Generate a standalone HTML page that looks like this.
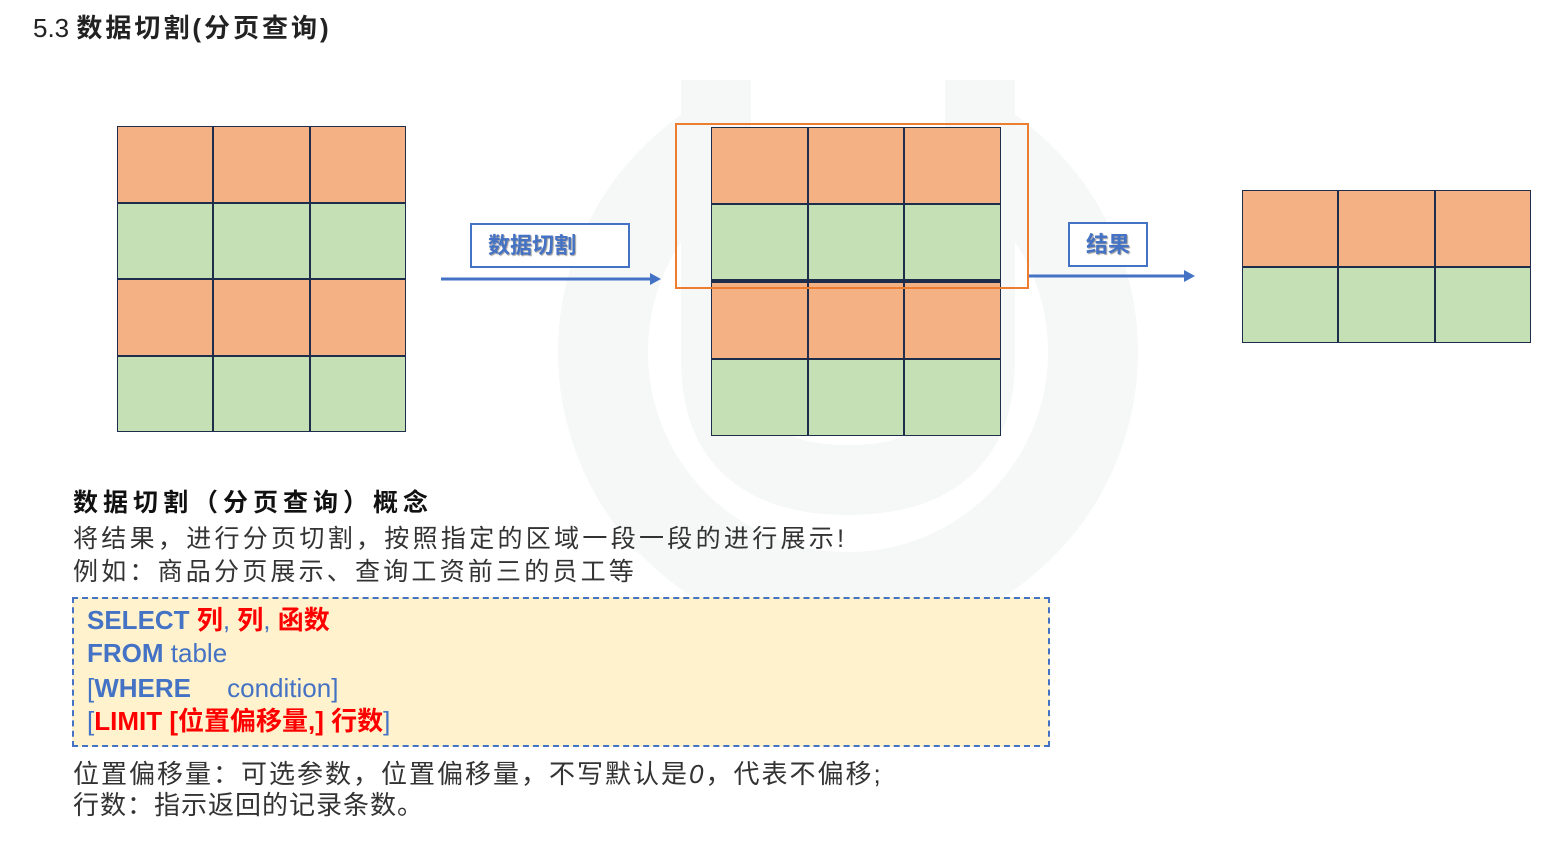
<!DOCTYPE html>
<html><head><meta charset="utf-8"><style>
body{margin:0;width:1544px;height:842px;background:#fff;position:relative;overflow:hidden;font-family:"Liberation Sans","Noto Sans CJK SC",sans-serif;}
.a{position:absolute;}
.g{position:absolute;display:grid;grid-template-columns:repeat(3,1fr);border:1px solid #1f2d4d;background:#1f2d4d;gap:2px;}
.o{background:#f4b183}.gr{background:#c5e0b4}
.t{position:absolute;white-space:nowrap;color:#333;}
</style></head><body>
<svg class="a" style="left:0;top:0" width="1544" height="842">
<circle cx="848" cy="352" r="245" fill="none" stroke="#f5f8f7" stroke-width="90"/>
<rect x="720" y="60" width="260" height="320" fill="#fff"/>
<path d="M716 80 L716 360 Q716 480 848 480 Q980 480 980 360 L980 80" fill="none" stroke="#f5f8f7" stroke-width="70"/>
<rect x="810" y="50" width="76" height="200" fill="#fff"/>
<line x1="441" y1="279" x2="652" y2="279" stroke="#4472c4" stroke-width="3"/>
<polygon points="650,273 661,279 650,285" fill="#4472c4"/>
<line x1="1027" y1="276" x2="1186" y2="276" stroke="#4472c4" stroke-width="3"/>
<polygon points="1184,270 1195,276 1184,282" fill="#4472c4"/>
</svg>
<div class="t" style="left:33px;top:8px;font-size:26px;color:#222">5.3 <b style="letter-spacing:3px">数据切割(分页查询)</b></div>
<div class="g" style="left:117px;top:126px;width:287px;height:304px;grid-template-rows:repeat(4,1fr)">
<div class="o"></div><div class="o"></div><div class="o"></div><div class="gr"></div><div class="gr"></div><div class="gr"></div><div class="o"></div><div class="o"></div><div class="o"></div><div class="gr"></div><div class="gr"></div><div class="gr"></div></div>
<div class="g" style="left:711px;top:127px;width:288px;height:307px;grid-template-rows:repeat(4,1fr)">
<div class="o"></div><div class="o"></div><div class="o"></div><div class="gr"></div><div class="gr"></div><div class="gr"></div><div class="o"></div><div class="o"></div><div class="o"></div><div class="gr"></div><div class="gr"></div><div class="gr"></div></div>
<div class="a" style="left:711px;top:279px;width:290px;height:3px;background:#1f2d4d"></div>
<div class="a" style="left:675px;top:123px;width:350px;height:162px;border:2px solid #ed7d31"></div>
<div class="g" style="left:1242px;top:190px;width:287px;height:151px;grid-template-rows:repeat(2,1fr)">
<div class="o"></div><div class="o"></div><div class="o"></div><div class="gr"></div><div class="gr"></div><div class="gr"></div></div>
<div class="a" style="left:470px;top:223px;border:2px solid #4472c4;background:#fff;color:#4472c4;font-weight:bold;font-size:22px;line-height:41px;padding-left:16px;box-sizing:border-box;width:160px;height:45px;text-shadow:1px 1px 1px #999">数据切割</div>
<div class="a" style="left:1068px;top:222px;width:80px;height:45px;border:2px solid #4472c4;box-sizing:border-box;background:#fff;color:#4472c4;font-weight:bold;font-size:22px;line-height:41px;text-align:center;text-shadow:1px 1px 1px #999">结果</div>
<div class="t" style="left:73px;top:483px;font-size:25px;font-weight:bold;color:#111;letter-spacing:5px">数据切割（分页查询）概念</div>
<div class="t" style="left:73px;top:519px;font-size:25px;letter-spacing:3.3px">将结果，进行分页切割，按照指定的区域一段一段的进行展示!</div>
<div class="t" style="left:73px;top:552px;font-size:25px;letter-spacing:3.2px">例如：商品分页展示、查询工资前三的员工等</div>
<div class="a" style="left:72px;top:597px;width:978px;height:150px;box-sizing:border-box;border:2px dashed #4472c4;background:#fff2cc"></div>
<div class="t" style="left:87px;top:604px;font-size:26px;line-height:33px;color:#4472c4">
<div><b>SELECT</b> <b style="color:#f00">列</b>, <b style="color:#f00">列</b>, <b style="color:#f00">函数</b></div>
<div><b>FROM</b> table</div>
<div style="margin-top:2px">[<b>WHERE</b> &nbsp;&nbsp;&nbsp;&nbsp;condition]</div>
<div>[<b style="color:#f00">LIMIT [位置偏移量,] 行数</b>]</div></div>
<div class="t" style="left:73px;top:754px;font-size:26px;letter-spacing:2px">位置偏移量：可选参数，位置偏移量，不写默认是<i>0</i>，代表不偏移;</div>
<div class="t" style="left:73px;top:785px;font-size:26px;letter-spacing:1px">行数：指示返回的记录条数。</div>
</body></html>
